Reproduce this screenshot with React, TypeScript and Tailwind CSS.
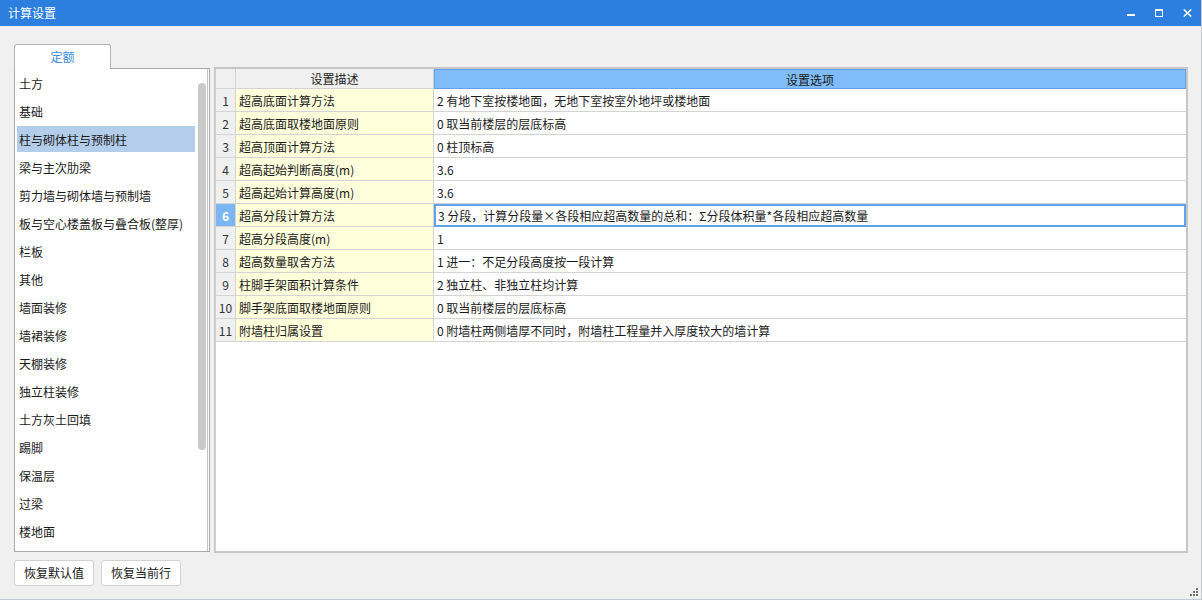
import React from "react";

const listItems = [
  "土方",
  "基础",
  "柱与砌体柱与预制柱",
  "梁与主次肋梁",
  "剪力墙与砌体墙与预制墙",
  "板与空心楼盖板与叠合板(整厚)",
  "栏板",
  "其他",
  "墙面装修",
  "墙裙装修",
  "天棚装修",
  "独立柱装修",
  "土方灰土回填",
  "踢脚",
  "保温层",
  "过梁",
  "楼地面",
];

const rows: [string, string][] = [
  ["超高底面计算方法", "2 有地下室按楼地面，无地下室按室外地坪或楼地面"],
  ["超高底面取楼地面原则", "0 取当前楼层的层底标高"],
  ["超高顶面计算方法", "0 柱顶标高"],
  ["超高起始判断高度(m)", "3.6"],
  ["超高起始计算高度(m)", "3.6"],
  ["超高分段计算方法", "3 分段，计算分段量×各段相应超高数量的总和：Σ分段体积量*各段相应超高数量"],
  ["超高分段高度(m)", "1"],
  ["超高数量取舍方法", "1 进一：不足分段高度按一段计算"],
  ["柱脚手架面积计算条件", "2 独立柱、非独立柱均计算"],
  ["脚手架底面取楼地面原则", "0 取当前楼层的层底标高"],
  ["附墙柱归属设置", "0 附墙柱两侧墙厚不同时，附墙柱工程量并入厚度较大的墙计算"],
];

export default function App() {
  return (
    <div
      className="relative w-[1202px] h-[600px] bg-[#f0f0f0] flex flex-col border-r border-b border-[#c3c9d0] overflow-hidden text-[12px] text-[#1a1a1a]"
      style={{ fontFamily: '"Noto Sans CJK SC", "Noto Sans", sans-serif' }}
    >
      {/* Title bar */}
      <div className="h-[26px] shrink-0 bg-[#2d7fdf] flex items-center justify-between pl-[8px] pr-[9px]">
        <span className="text-white text-[12px] leading-none">计算设置</span>
        <div className="flex items-center gap-[20px]">
          <svg width="8" height="8" viewBox="0 0 8 8">
            <rect x="0" y="5" width="8" height="2" fill="#fff" />
          </svg>
          <svg width="8" height="8" viewBox="0 0 8 8">
            <rect x="0.5" y="1" width="7" height="6.5" fill="none" stroke="#fff" strokeWidth="1" />
            <rect x="0" y="0" width="8" height="2" fill="#fff" />
          </svg>
          <svg width="9" height="8" viewBox="0 0 9 8">
            <path d="M0.8 0.5 L8.2 7.5 M8.2 0.5 L0.8 7.5" stroke="#fff" strokeWidth="1.5" />
          </svg>
        </div>
      </div>

      {/* Main */}
      <div className="flex pl-[14px] pt-[18px] gap-[4px]">
        {/* Left column */}
        <div className="w-[196px] flex flex-col">
          <div className="flex">
            <div className="w-[97px] h-[25px] -mb-px relative z-10 bg-white border border-[#b4b4b4] border-b-0 rounded-t-[3px] flex items-center justify-center text-[#3b8de4]">
              定额
            </div>
          </div>
          <div className="h-[484px] bg-white border border-[#a9a9a9] flex">
            <div className="w-[180px] pl-[2px] pt-[1px] flex flex-col gap-[2px]">
              {listItems.map((t, i) => (
                <div
                  key={t}
                  className={
                    "h-[26px] shrink-0 flex items-center pl-[2px] pt-px whitespace-nowrap " +
                    (i === 2 ? "bg-[#b3cdeb]" : "")
                  }
                >
                  {t}
                </div>
              ))}
            </div>
            <div className="w-[12px] ml-[1px] pt-[14px] flex justify-center border-r border-[#c4c4c4]">
              <div className="w-[8px] h-[367px] rounded-full bg-[#c9c9c9]" />
            </div>
          </div>
        </div>

        {/* Table panel */}
        <div className="mt-[23px] w-[974px] h-[486px] bg-white border-2 border-l border-[#c6c6c6]">
          <div className="border-l border-[#d0d0d0] h-full">
            {/* Header */}
            <div className="flex h-[20px]">
              <div className="w-[20px] bg-[#f0f0f0] border-r border-b border-[#d4d4d4]" />
              <div className="w-[198px] bg-[#f0f0f0] border-r border-b border-[#d4d4d4] flex items-center justify-center pt-px">
                设置描述
              </div>
              <div className="flex-1 bg-[#80bcf8] border border-[#64a3ea] flex items-center justify-center pt-px">
                设置选项
              </div>
            </div>
            {rows.map(([d, v], i) => {
              const sel = i === 5;
              return (
                <div key={i} className="flex h-[23px]">
                  <div
                    className={
                      "w-[20px] border-r border-b border-[#d4d4d4] flex items-center justify-center pt-px " +
                      (sel ? "bg-[#7ab6f4] text-white font-bold" : "bg-[#f0f0f0] text-[#333]")
                    }
                  >
                    {i + 1}
                  </div>
                  <div className="w-[198px] bg-[#ffffdc] border-r border-b border-[#d4d4d4] flex items-center pl-[3px] pt-px whitespace-nowrap">
                    {d}
                  </div>
                  {sel ? (
                    <div className="flex-1 border-2 border-[#5fa2ea] flex items-center pl-[2px] whitespace-nowrap">
                      {v}
                    </div>
                  ) : (
                    <div className="flex-1 border-b border-[#d4d4d4] flex items-center pl-[3px] pt-px whitespace-nowrap">
                      {v}
                    </div>
                  )}
                </div>
              );
            })}
          </div>
        </div>
      </div>

      {/* Buttons */}
      <div className="flex gap-[7px] pl-[14px] mt-[7px]">
        <button className="w-[80px] h-[26px] bg-white border border-[#d2d2d2] rounded-[3px] text-[12px] text-[#1a1a1a]">
          恢复默认值
        </button>
        <button className="w-[80px] h-[26px] bg-white border border-[#d2d2d2] rounded-[3px] text-[12px] text-[#1a1a1a]">
          恢复当前行
        </button>
      </div>

      {/* Resize grip */}
      <svg className="absolute right-[3px] bottom-[3px]" width="8" height="8" viewBox="0 0 8 8">
        <rect x="6" y="0" width="2" height="2" fill="#707070" />
        <rect x="3" y="3" width="2" height="2" fill="#707070" />
        <rect x="6" y="3" width="2" height="2" fill="#707070" />
        <rect x="0" y="6" width="2" height="2" fill="#707070" />
        <rect x="3" y="6" width="2" height="2" fill="#707070" />
        <rect x="6" y="6" width="2" height="2" fill="#707070" />
      </svg>
    </div>
  );
}
